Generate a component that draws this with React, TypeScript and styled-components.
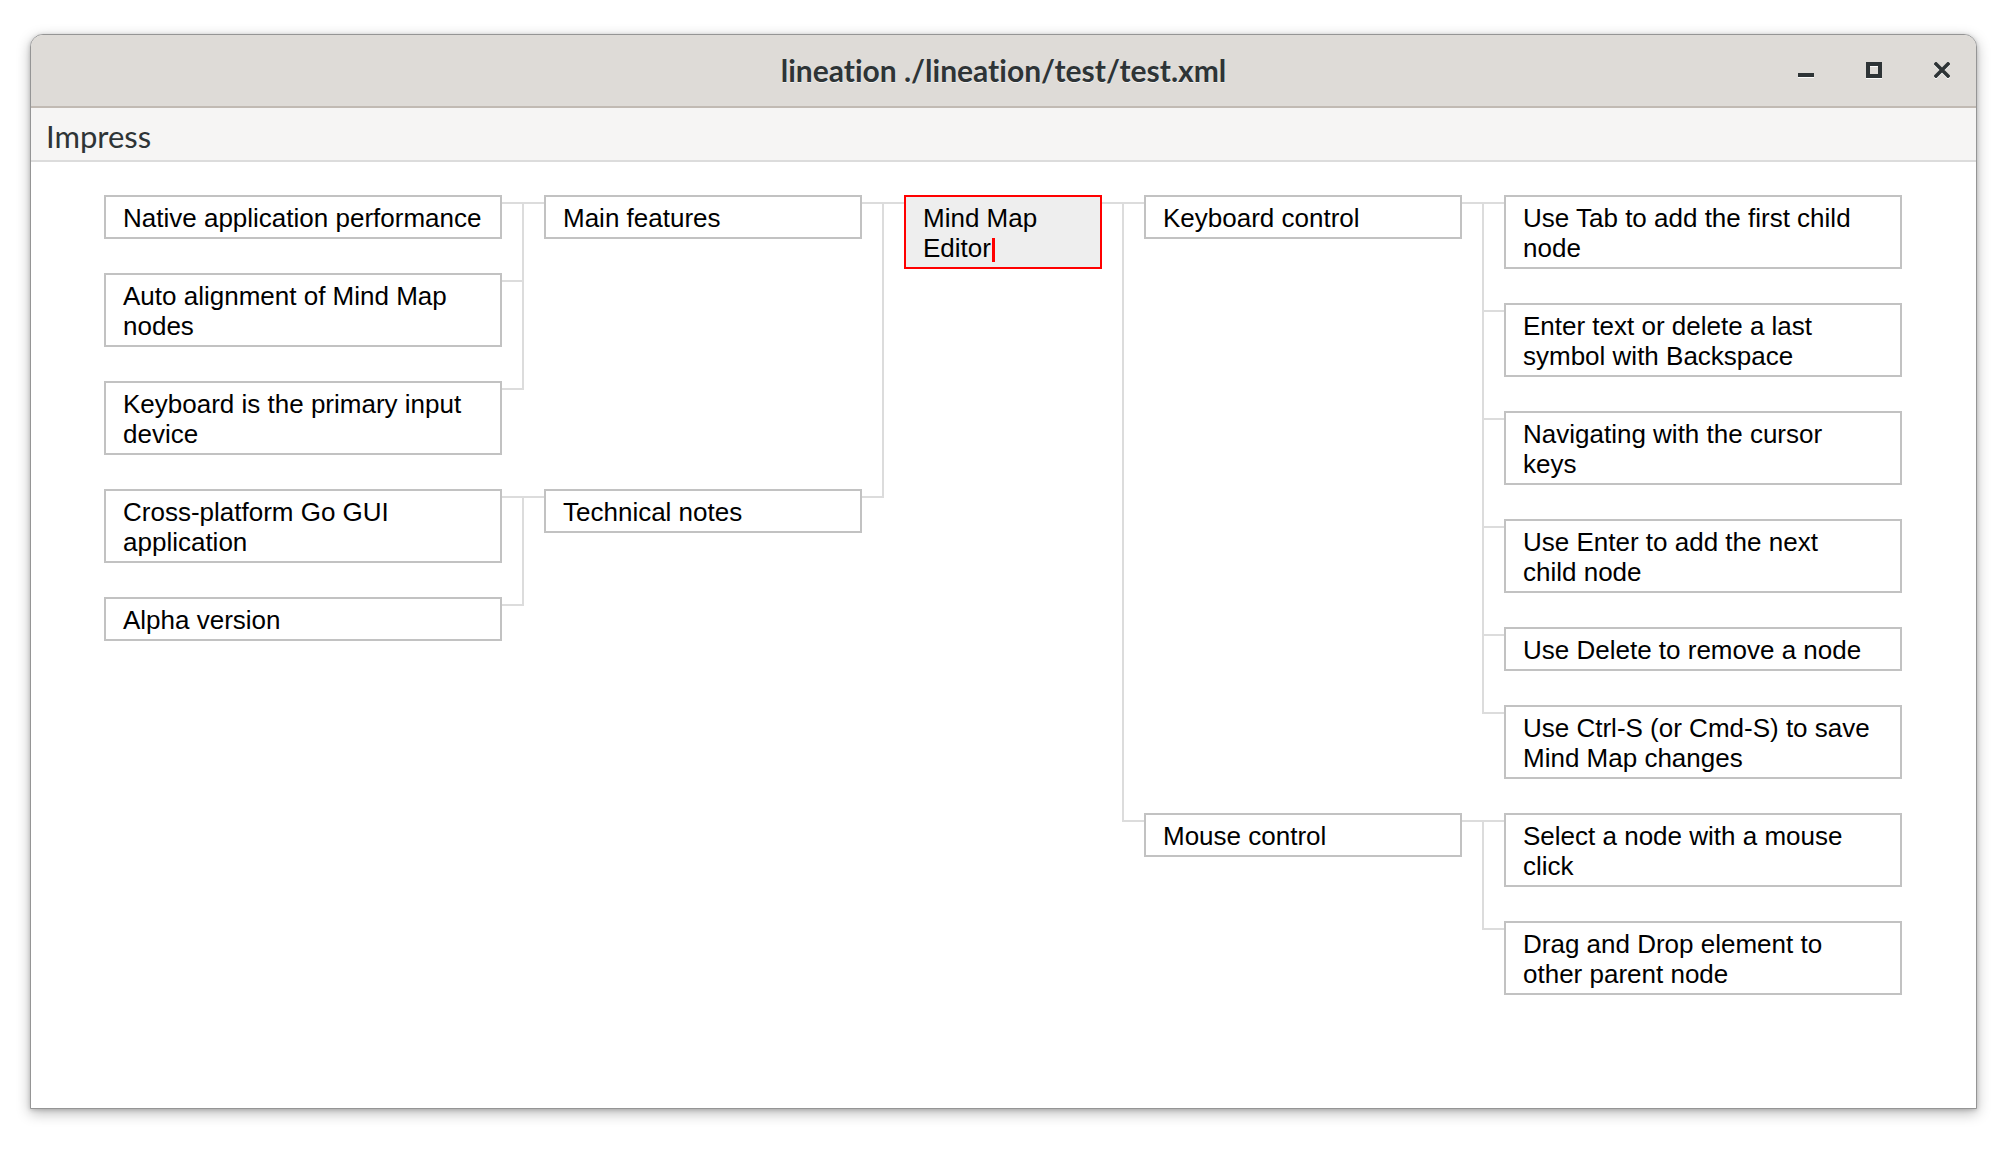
import React from "react";
import styled, { createGlobalStyle, css } from "styled-components";

type Side = "left" | "right";

interface TreeNode {
  text: string;
  children?: TreeNode[];
}

const leftTree: TreeNode[] = [
  {
    text: "Main features",
    children: [
      { text: "Native application performance" },
      { text: "Auto alignment of Mind Map\nnodes" },
      { text: "Keyboard is the primary input\ndevice" },
    ],
  },
  {
    text: "Technical notes",
    children: [
      { text: "Cross-platform Go GUI\napplication" },
      { text: "Alpha version" },
    ],
  },
];

const rightTree: TreeNode[] = [
  {
    text: "Keyboard control",
    children: [
      { text: "Use Tab to add the first child\nnode" },
      { text: "Enter text or delete a last\nsymbol with Backspace" },
      { text: "Navigating with the cursor\nkeys" },
      { text: "Use Enter to add the next\nchild node" },
      { text: "Use Delete to remove a node" },
      { text: "Use Ctrl-S (or Cmd-S) to save\nMind Map changes" },
    ],
  },
  {
    text: "Mouse control",
    children: [
      { text: "Select a node with a mouse\nclick" },
      { text: "Drag and Drop element to\nother parent node" },
    ],
  },
];

const LEVEL_WIDTH: Record<number, number> = { 0: 198, 1: 318, 2: 398 };
const H_GAP = 42;
const V_GAP = 34;
const LINE = "#dcdcdc";

const GlobalStyle = createGlobalStyle`
  html, body {
    margin: 0;
    padding: 0;
    background: #ffffff;
  }
  body {
    width: 2014px;
    height: 1166px;
    overflow: hidden;
  }
`;

const Window = styled.div`
  box-sizing: border-box;
  margin: 34px 0 0 30px;
  width: 1947px;
  height: 1075px;
  border: 1px solid #959595;
  border-radius: 13px 13px 0 0;
  background: #ffffff;
  box-shadow: 0 4px 14px rgba(0, 0, 0, 0.28), 0 1px 4px rgba(0, 0, 0, 0.18);
  display: flex;
  flex-direction: column;
  overflow: hidden;
`;

const TitleBar = styled.div`
  box-sizing: border-box;
  height: 73px;
  flex: none;
  display: grid;
  grid-template-columns: 1fr auto 1fr;
  align-items: center;
  background: #dedbd7;
  border-bottom: 2px solid #c1bab3;
  padding-bottom: 1px;
`;

const Title = styled.div`
  grid-column: 2;
  font-family: Lato, "Open Sans", sans-serif;
  font-weight: 700;
  font-size: 30px;
  font-variant-ligatures: none;
  font-feature-settings: "liga" 0, "clig" 0;
  color: #2e3436;
  white-space: nowrap;
  text-shadow: 0 1px 0 rgba(255, 255, 255, 0.6);
`;

const Controls = styled.div`
  grid-column: 3;
  justify-self: end;
  display: flex;
  align-self: stretch;
`;

const ControlButton = styled.div`
  width: 68px;
  display: flex;
  align-items: center;
  justify-content: center;
  color: #2e3436;
  svg {
    display: block;
    filter: drop-shadow(0 1px 0 rgba(255, 255, 255, 0.9));
  }
`;

const MenuBar = styled.div`
  box-sizing: border-box;
  height: 54px;
  flex: none;
  display: flex;
  align-items: center;
  padding: 4px 0 0 15px;
  background: #f6f5f4;
  border-bottom: 2px solid #dcdcdc;
`;

const MenuItem = styled.div`
  font-family: Lato, "Open Sans", sans-serif;
  font-size: 31px;
  font-variant-ligatures: none;
  color: #2e3436;
`;

const Canvas = styled.div`
  flex: 1;
  display: flex;
  align-items: flex-start;
  padding: 33px 0 0 73px;
  background: #ffffff;
`;

const NodeBox = styled.div<{ $width: number; $selected?: boolean }>`
  box-sizing: border-box;
  flex: none;
  width: ${(p) => p.$width}px;
  padding: 6px 6px 4px 17px;
  border: 2px solid ${(p) => (p.$selected ? "#ff0000" : "#c2c2c2")};
  background: ${(p) => (p.$selected ? "#eeeeee" : "#ffffff")};
  font-family: "Liberation Sans", Arial, sans-serif;
  font-size: 26px;
  line-height: 30px;
  color: #000000;
  white-space: pre;
`;

const Caret = styled.span`
  display: inline-block;
  width: 3px;
  height: 24px;
  margin-left: 1px;
  background: #ff0000;
  vertical-align: -5px;
`;

const Children = styled.div<{ $side: Side }>`
  position: relative;
  flex: none;
  display: flex;
  flex-direction: column;
  gap: ${V_GAP}px;
  ${(p) =>
    p.$side === "right"
      ? css`margin-left: ${H_GAP}px;`
      : css`margin-right: ${H_GAP}px;`}

  &::before {
    content: "";
    position: absolute;
    top: 7px;
    height: 2px;
    width: 22px;
    background: ${LINE};
    ${(p) =>
      p.$side === "right"
        ? css`left: -${H_GAP}px;`
        : css`right: -${H_GAP}px;`}
  }
`;

const Slot = styled.div<{ $side: Side }>`
  position: relative;
  display: flex;
  flex-direction: ${(p) => (p.$side === "right" ? "row" : "row-reverse")};
  align-items: flex-start;

  &::before {
    content: "";
    position: absolute;
    top: 7px;
    height: 2px;
    width: 22px;
    background: ${LINE};
    ${(p) => (p.$side === "right" ? css`left: -22px;` : css`right: -22px;`)}
  }

  &:not(:last-child)::after {
    content: "";
    position: absolute;
    top: 7px;
    width: 2px;
    height: calc(100% + ${V_GAP + 2}px);
    background: ${LINE};
    ${(p) => (p.$side === "right" ? css`left: -22px;` : css`right: -22px;`)}
  }
`;

function Branch({ nodes, side, level }: { nodes: TreeNode[]; side: Side; level: number }) {
  return (
    <Children $side={side}>
      {nodes.map((n) => (
        <Slot key={n.text} $side={side}>
          <NodeBox $width={LEVEL_WIDTH[level]}>{n.text}</NodeBox>
          {n.children && n.children.length > 0 && (
            <Branch nodes={n.children} side={side} level={level + 1} />
          )}
        </Slot>
      ))}
    </Children>
  );
}

const MinimizeIcon = () => (
  <svg width="16" height="16" viewBox="0 0 16 16">
    <rect x="0" y="11" width="16" height="4" fill="currentColor" />
  </svg>
);

const MaximizeIcon = () => (
  <svg width="16" height="16" viewBox="0 0 16 16">
    <rect x="2" y="2" width="12" height="12" fill="none" stroke="currentColor" strokeWidth="4" />
  </svg>
);

const CloseIcon = () => (
  <svg width="16" height="16" viewBox="0 0 16 16">
    <path d="M2 2 L14 14 M14 2 L2 14" stroke="currentColor" strokeWidth="3.6" strokeLinecap="square" fill="none" />
  </svg>
);

export default function App() {
  return (
    <>
      <GlobalStyle />
      <Window>
        <TitleBar>
          <Title>lineation ./lineation/test/test.xml</Title>
          <Controls>
            <ControlButton>
              <MinimizeIcon />
            </ControlButton>
            <ControlButton>
              <MaximizeIcon />
            </ControlButton>
            <ControlButton>
              <CloseIcon />
            </ControlButton>
          </Controls>
        </TitleBar>
        <MenuBar>
          <MenuItem>Impress</MenuItem>
        </MenuBar>
        <Canvas>
          <Branch nodes={leftTree} side="left" level={1} />
          <NodeBox $width={LEVEL_WIDTH[0]} $selected>
            {"Mind Map\nEditor"}
            <Caret />
          </NodeBox>
          <Branch nodes={rightTree} side="right" level={1} />
        </Canvas>
      </Window>
    </>
  );
}
